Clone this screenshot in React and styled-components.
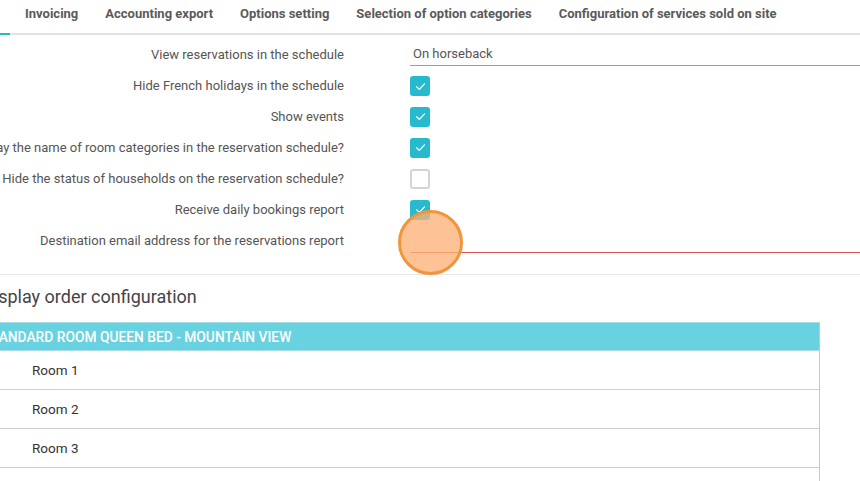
import React from "react";
import styled, { createGlobalStyle } from "styled-components";

const Global = createGlobalStyle`
  html, body { margin: 0; padding: 0; background: #fff; overflow: hidden; }
  body { font-family: Roboto, "Liberation Sans", Arial, sans-serif; width: 860px; height: 481px; }
`;

const Page = styled.div`
  width: 1000px;
  margin-left: -30px;
  position: relative;
`;

const TabBar = styled.div`
  display: flex;
  height: 33px;
  border-bottom: 2px solid #e2e2e2;
  margin-left: -37px;
`;

const Tab = styled.div`
  padding: 0 13.5px;
  font-size: 13px;
  font-weight: 700;
  color: ${(p) => (p.$active ? "#26b8cc" : "#5a5a5a")};
  display: flex;
  align-items: center;
  height: 27px;
  white-space: nowrap;
  position: relative;
  &::after {
    content: "";
    position: absolute;
    left: 0;
    right: 2px;
    bottom: -8px;
    height: 2px;
    background: ${(p) => (p.$active ? "#26b8cc" : "transparent")};
  }
`;

const Form = styled.div`
  display: grid;
  grid-template-columns: 374px 1fr;
  column-gap: 66px;
  padding: 4px 0 18px;
  border-bottom: 1px solid #e6e6e6;
`;

const Label = styled.div`
  height: 31px;
  display: flex;
  align-items: center;
  justify-content: flex-end;
  font-size: 13px;
  color: #555;
  white-space: nowrap;
`;

const Control = styled.div`
  height: 31px;
  display: flex;
  align-items: center;
`;

const Select = styled.div`
  width: 100%;
  height: 22px;
  box-sizing: border-box;
  padding: 0 0 2px 3px;
  border-bottom: 1px solid #9e9e9e;
  font-size: 13px;
  color: #555;
  display: flex;
  align-items: center;
`;

const Input = styled.div`
  width: 100%;
  height: 23px;
  margin-top: 1px;
  border-bottom: 1px solid #d9534f;
`;

const Box = styled.div`
  width: 20px;
  height: 20px;
  margin-top: ${(p) => (p.$first ? "1px" : "0")};
  box-sizing: border-box;
  border-radius: 3px;
  background: ${(p) => (p.$checked ? "#27b9cd" : "#fff")};
  border: ${(p) => (p.$checked ? "none" : "2px solid #d4d4d4")};
  display: flex;
  align-items: center;
  justify-content: center;
`;

const Heading = styled.h2`
  margin: 10px 0 0 12px;
  font-size: 18px;
  line-height: 24px;
  font-weight: 400;
  color: #444;
`;

const Table = styled.div`
  margin-top: 13px;
  margin-left: 1px;
  width: 848px;
  border-right: 1px solid #c8c8c8;
`;

const TableHead = styled.div`
  height: 27px;
  background: #69d2e0;
  border-top: 1px solid #a8dde5;
  border-bottom: 1px solid #a8dde5;
  display: flex;
  align-items: center;
  padding-left: 11.5px;
  font-size: 13.8px;
  font-weight: 500;
  color: #fff;
  white-space: nowrap;
`;

const Row = styled.div`
  height: 38px;
  border-bottom: 1px solid #cfcfcf;
  display: flex;
  align-items: center;
  padding-left: 61px;
  font-size: 13.5px;
  color: #333;
`;

const ClickMark = styled.div`
  position: absolute;
  left: 428px;
  top: 210px;
  width: 59px;
  height: 59px;
  border-radius: 50%;
  border: 3px solid #f2943a;
  background: rgba(252, 178, 120, 0.78);
  pointer-events: none;
`;

const Check = () => (
  <svg width="13" height="13" viewBox="0 0 12 12">
    <path d="M2.4 6.3 L5 8.7 L9.7 3.6" fill="none" stroke="#fff" strokeWidth="1.2" strokeLinecap="round" strokeLinejoin="round" />
  </svg>
);

const rows = [
  { label: "View reservations in the schedule", type: "select", value: "On horseback" },
  { label: "Hide French holidays in the schedule", type: "check", checked: true, first: true },
  { label: "Show events", type: "check", checked: true },
  { label: "Display the name of room categories in the reservation schedule?", type: "check", checked: true },
  { label: "Hide the status of households on the reservation schedule?", type: "check", checked: false },
  { label: "Receive daily bookings report", type: "check", checked: true },
  { label: "Destination email address for the reservations report", type: "input" },
];

const tabs = ["Planning", "Invoicing", "Accounting export", "Options setting", "Selection of option categories", "Configuration of services sold on site"];

export default function App() {
  return (
    <>
      <Global />
      <Page>
        <TabBar>
          {tabs.map((t, i) => (
            <Tab key={t} $active={i === 0}>{t}</Tab>
          ))}
        </TabBar>
        <Form>
          {rows.map((r) => (
            <React.Fragment key={r.label}>
              <Label>{r.label}</Label>
              <Control>
                {r.type === "select" && <Select>{r.value}</Select>}
                {r.type === "check" && (
                  <Box $checked={r.checked} $first={r.first}>{r.checked && <Check />}</Box>
                )}
                {r.type === "input" && <Input />}
              </Control>
            </React.Fragment>
          ))}
        </Form>
        <Heading>Display order configuration</Heading>
        <Table>
          <TableHead>STANDARD ROOM QUEEN BED - MOUNTAIN VIEW</TableHead>
          {["Room 1", "Room 2", "Room 3", "Room 4"].map((r) => (
            <Row key={r}>{r}</Row>
          ))}
        </Table>
        <ClickMark />
      </Page>
    </>
  );
}
